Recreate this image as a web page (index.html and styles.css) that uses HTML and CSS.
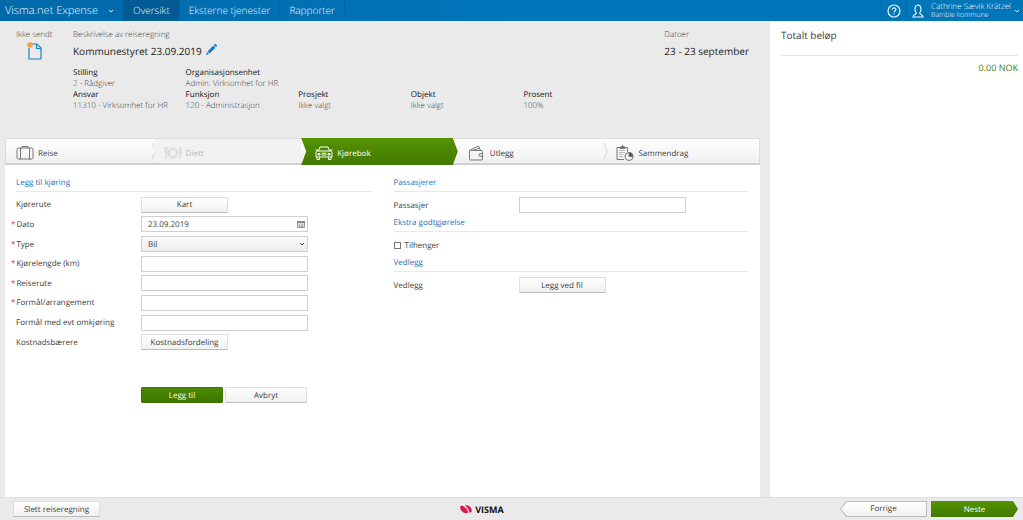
FILE: index.html
```html
<!DOCTYPE html>
<html lang="no">
<head>
<meta charset="utf-8">
<meta name="viewport" content="width=device-width, initial-scale=1">
<title>Visma.net Expense</title>
<link rel="stylesheet" href="styles.css">
</head>
<body>
<header class="topbar">
  <button class="brand" type="button">Visma.net Expense
    <svg class="chevron" viewBox="0 0 6 4"><path d="M1 1l2 2 2-2"/></svg>
  </button>
  <nav class="nav">
    <a class="nav-link current" href="#">Oversikt</a>
    <a class="nav-link" href="#">Eksterne tjenester</a>
    <a class="nav-link" href="#">Rapporter</a>
  </nav>
  <button class="help" type="button" aria-label="Hjelp">
    <svg viewBox="0 0 14 14"><circle cx="7" cy="7" r="6"/><path d="M5.2 5.6c0-2.4 3.7-2.4 3.7-.1 0 1.3-1.8 1.4-1.8 2.8M7.1 9.4v1.1"/></svg>
  </button>
  <button class="user" type="button">
    <svg class="avatar" viewBox="0 0 12 14"><path d="M4.400 9.200C2.200 7 2.400 1 6 1s3.800 6 1.600 8.200c0 1.300 3.400 1 3.400 3.800H1c0-2.800 3.400-2.500 3.400-3.800z"/></svg>
    <span class="user-text"><span>Cathrine Sævik Krätzel</span><span>Bamble kommune</span></span>
    <svg class="chevron" viewBox="0 0 6 4"><path d="M1 1l2 2 2-2"/></svg>
  </button>
</header>

<div class="page">
  <main class="content">
    <section class="summary">
      <div class="status">
        <span>Ikke sendt</span>
        <svg viewBox="0 0 16 20"><path d="M4 3h6l4 4v11H2V7M9.500 3v4.500H14" fill="none" stroke="#1a82c8" stroke-width="1.200"/><circle cx="3" cy="4" r="2.800" fill="#f3a33c"/></svg>
      </div>
      <div class="details">
        <div class="headline">
          <div>
            <p class="caption">Beskrivelse av reiseregning</p>
            <h1 class="title">Kommunestyret 23.09.2019
              <button class="edit" type="button" aria-label="Rediger"><svg viewBox="0 0 12 12"><path d="M0 12l1-3.200 2.200 2.200zM1.600 8.100L8 1.700l2.300 2.300-6.400 6.400zM8.600 1.100l.8-.8c.5-.5 1-.4 1.500 0l.8.800c.4.500.4 1 0 1.500l-.8.800z"/></svg></button>
            </h1>
          </div>
          <div class="dates">
            <p class="caption">Datoer</p>
            <p class="title">23 - 23 september</p>
          </div>
        </div>
        <dl class="facts">
          <div><dt>Stilling</dt><dd>2 - Rådgiver</dd></div>
          <div class="last"><dt>Organisasjonsenhet</dt><dd>Admin. Virksomhet for HR</dd></div>
          <div><dt>Ansvar</dt><dd>11310 - Virksomhet for HR</dd></div>
          <div><dt>Funksjon</dt><dd>120 - Administrasjon</dd></div>
          <div><dt>Prosjekt</dt><dd>Ikke valgt</dd></div>
          <div><dt>Objekt</dt><dd>Ikke valgt</dd></div>
          <div><dt>Prosent</dt><dd>100%</dd></div>
        </dl>
      </div>
    </section>

    <nav class="steps">
      <a class="step" href="#">
        <svg class="step-icon" viewBox="0 0 18 16"><path d="M2.500 3h13q1.500 0 1.500 1.500v8q0 1.500-1.500 1.500h-13Q1 14 1 12.500v-8Q1 3 2.500 3zM4.500 3v11M13.500 3v11M6 3V1.500h6V3M4 14v1M14 14v1"/></svg>
        Reise
        <svg class="divider" viewBox="0 0 5 26" preserveAspectRatio="none"><path d="M1 4l3 9-3 9"/></svg>
      </a>
      <a class="step disabled" href="#">
        <svg class="step-icon" viewBox="0 0 18 16"><circle cx="9" cy="8" r="5"/><circle cx="9" cy="8" r="3.500"/><path d="M1 2v4q0 2 1 2t1-2V2M2 2v12M16 14V2q1.500 1 1.500 6H16"/></svg>
        Diett
      </a>
      <a class="step active" href="#" aria-current="step">
        <svg class="step-icon" viewBox="0 0 18 16"><path d="M3.500 6L5 2h8l1.500 4M2 6h14l1 1.500V12H1V7.500zM2 12v2.500h2.500V12M13.500 12v2.500H16V12M.5 5H3M15 5h2.500M3 8.500h2v1.500H3zM13 8.500h2v1.500h-2zM6.500 8.200h5M6.500 10h5"/></svg>
        Kjørebok
      </a>
      <a class="step" href="#">
        <svg class="step-icon" viewBox="0 0 18 16"><path d="M2.500 5.500h11q1 0 1 1v7.500q0 1-1 1h-11q-1 0-1-1V6q0-1 1-1.300L10.500 1l2 4.500M4.500 5.500L12 3M14.500 8.500H12.500q-1.500 0-1.500 1.500t1.500 1.500h2M12.500 10h.6"/></svg>
        Utlegg
        <svg class="divider" viewBox="0 0 5 26" preserveAspectRatio="none"><path d="M1 4l3 9-3 9"/></svg>
      </a>
      <a class="step" href="#">
        <svg class="step-icon" viewBox="0 0 18 16"><path d="M8 14.500H1v-12h3M9 2.500h2.500V7"/><path d="M3 5.500h6M3 7.500h6M3 9.500h4M3 11.500h4" stroke="#bbb"/><path d="M4 3.500V2h1.200Q6.500-.5 7.800 2H9v1.500z" fill="#666"/><circle cx="13" cy="11.500" r="4"/><path d="M13 11.500v-4a4 4 0 0 1 4 4z" fill="#555"/></svg>
        Sammendrag
      </a>
    </nav>

    <form class="panel">
      <section class="column">
        <h2 class="section-title">Legg til kjøring</h2>
        <div class="fields driving">
          <label for="map">Kjørerute</label><button class="btn" id="map" type="button">Kart</button>
          <label class="required" for="date">Dato</label>
          <div class="date-field">
            <input class="field" id="date" type="text" value="23.09.2019">
            <svg class="calendar" viewBox="0 0 8 8"><path d="M.5 1.500h7v6h-7z" fill="#ddd" stroke="#999"/><path d="M0 1h8v2H0z" fill="#888"/><path d="M2 5h1M4 5h2M2 6.500h1M4 6.500h2" stroke="#999"/></svg>
          </div>
          <label class="required" for="type">Type</label>
          <div class="select-wrap">
            <select class="field" id="type"><option>Bil</option></select>
            <svg class="chevron" viewBox="0 0 6 4"><path d="M1 1l2 2 2-2"/></svg>
          </div>
          <label class="required" for="length">Kjørelengde (km)</label><input class="field" id="length" type="text">
          <label class="required" for="route">Reiserute</label><input class="field" id="route" type="text">
          <label class="required" for="purpose">Formål/arrangement</label><input class="field" id="purpose" type="text">
          <label for="detour">Formål med evt omkjøring</label><input class="field" id="detour" type="text">
          <label for="cost">Kostnadsbærere</label><button class="btn" id="cost" type="button">Kostnadsfordeling</button>
        </div>
        <div class="actions">
          <button class="btn primary" type="button">Legg til</button>
          <button class="btn" type="button">Avbryt</button>
        </div>
      </section>

      <section class="column">
        <h2 class="section-title">Passasjerer</h2>
        <div class="fields single">
          <label for="passenger">Passasjer</label><input class="field" id="passenger" type="text">
        </div>
        <h2 class="section-title">Ekstra godtgjørelse</h2>
        <label class="check"><input type="checkbox">Tilhenger</label>
        <h2 class="section-title">Vedlegg</h2>
        <div class="fields single">
          <label for="file">Vedlegg</label><button class="btn" id="file" type="button">Legg ved fil</button>
        </div>
      </section>
    </form>
  </main>

  <aside class="totals">
    <h2>Totalt beløp</h2>
    <p>0.00 NOK</p>
  </aside>
</div>

<footer class="bottombar">
  <button class="btn" type="button">Slett reiseregning</button>
  <div class="logo">
    <svg viewBox="0 0 12 10"><path d="M.3 2.200C2.500.5 7 3.500 8.200 8.700 4 10.500-.8 6 .3 2.200zM4.800 1.500C7.500.3 12 3 11.800 7c-.3 1-1.300 1.500-2.300 1.700C9 5.500 7.200 3 4.800 1.500z" fill="#e0164c"/></svg>
    <span>VISMA</span>
  </div>
  <div class="pager">
    <button class="back" type="button"><span>Forrige</span></button>
    <button class="next" type="button">Neste</button>
  </div>
</footer>
</body>
</html>
```
FILE: styles.css
```css
* {
  box-sizing: border-box;
}

body {
  margin: 0;
  min-height: 100vh;
  display: flex;
  flex-direction: column;
  background: #eaeaea;
  color: #3c3c3c;
  font: 8px/11px "Open Sans", "Noto Sans", sans-serif;
  text-rendering: geometricPrecision;
}

h1, h2, p, dl, dd {
  margin: 0;
  font-weight: 400;
}

a {
  color: inherit;
  text-decoration: none;
}

button, input, select {
  font: inherit;
  color: inherit;
  text-rendering: inherit;
}

.chevron {
  width: 6px;
  height: 4px;
  fill: none;
  stroke: currentColor;
  stroke-width: 1;
}

/* Top bar */
.topbar {
  display: flex;
  height: 21px;
  background: linear-gradient(90deg, #0069aa, #0075ba 50%);
  color: #eef7fd;
  font-weight: 300;
}

.brand, .help, .user {
  display: flex;
  align-items: center;
  border: 0;
  padding: 0;
  background: none;
}

.brand {
  width: 123px;
  justify-content: space-between;
  padding: 0 9px 0 5px;
  font-size: 11px;
}

.nav {
  display: flex;
  flex: 1;
  font-size: 10px;
  line-height: 20px;
}

.nav-link {
  padding: 0 9px 0 10px;
  box-shadow: 1px 0 #0068aa;
}

.nav-link.current {
  background: #005a93;
}

.help {
  width: 26px;
  justify-content: center;
  border: solid #0068aa;
  border-width: 0 1px;
}

.help svg {
  width: 14px;
  height: 14px;
  fill: none;
  stroke: currentColor;
  stroke-width: 1.2;
}

.user {
  width: 116px;
  gap: 7px;
  padding: 0 3px 0 5px;
}

.avatar {
  width: 12px;
  height: 14px;
  flex: none;
  fill: none;
  stroke: currentColor;
  stroke-width: 1.2;
}

.user .chevron {
  flex: none;
}

.user-text {
  flex: 1;
  min-width: 0;
  display: flex;
  flex-direction: column;
  line-height: 9px;
  text-align: left;
  white-space: nowrap;
}

.user-text span + span {
  font-size: 7px;
}

/* Page columns */
.page {
  flex: 1;
  display: flex;
}

.content {
  flex: 1;
  display: flex;
  flex-direction: column;
  padding: 0 10px 0 5px;
}

.totals {
  width: 253px;
  padding: 7px 5px 0 11px;
  background: #fff;
}

.totals h2 {
  padding-bottom: 13px;
  border-bottom: 1px solid #e2e2e2;
  font-size: 10px;
  line-height: 14px;
}

.totals p {
  padding-top: 6px;
  color: #3f7d0a;
  font-size: 9px;
  line-height: 12px;
  text-align: right;
}

/* Report summary */
.summary {
  display: flex;
  height: 117px;
  padding-top: 8px;
}

.status {
  width: 68px;
  padding-left: 11px;
  color: #444;
  font-weight: 300;
}

.status svg {
  display: block;
  width: 16px;
  height: 20px;
  margin: 1px 0 0 11px;
}

.details {
  flex: 1;
}

.headline {
  display: flex;
  justify-content: space-between;
  padding-right: 11px;
}

.caption {
  color: #444;
  font-weight: 300;
}

.title {
  display: flex;
  gap: 4px;
  padding-top: 4px;
  color: #222;
  font-size: 10px;
  line-height: 14px;
}

.edit {
  width: 11px;
  height: 11px;
  padding: 0;
  border: 0;
  background: none;
}

.edit svg {
  display: block;
  fill: #1a7cc4;
}

.facts {
  display: grid;
  grid-template-columns: repeat(5, 1fr);
  max-width: 563px;
  padding-top: 9px;
  white-space: nowrap;
}

.facts .last {
  grid-column: 2 / -1;
}

.facts dt {
  color: #111;
}

.facts dd {
  color: #444;
  font-weight: 300;
}

/* Wizard steps */
.steps {
  display: grid;
  grid-template-columns: 148fr 148fr 157fr 149fr 153fr;
  height: 27px;
  border: 1px solid #dcdcdc;
  border-bottom: 2px solid #d0d0d0;
  background: linear-gradient(#fff, #f0f0f0);
}

.step {
  position: relative;
  display: flex;
  align-items: center;
  gap: 4px;
  padding: 4px 0 0 10px;
}

.step-icon {
  width: 18px;
  height: 16px;
  fill: none;
  stroke: #777;
  stroke-width: 1;
}

.divider {
  position: absolute;
  top: 0;
  right: -2px;
  width: 5px;
  height: 100%;
  fill: none;
  stroke: #d4d4d4;
}

.disabled {
  background: #f2f2f2;
  color: #b4b4b4;
}

.disabled .step-icon {
  stroke: #d4d4d4;
}

.active {
  margin: -1px 0 -2px;
  padding: 3px 0 0 14px;
  background: linear-gradient(#559400, #427800);
  clip-path: polygon(0 0, calc(100% - 5px) 0, 100% 50%, calc(100% - 5px) 100%, 0 100%, 5px 50%);
  color: #fff;
}

.active .step-icon {
  stroke: #fff;
}

/* Form */
.panel {
  flex: 1;
  display: grid;
  grid-template-columns: 1fr 1fr;
  gap: 22px;
  padding: 11px 11px 0;
  background: #fff;
}

.section-title {
  padding: 1px 0 2px;
  border-bottom: 1px solid #e8e8e8;
  color: #1f70b8;
  font-size: 8px;
  line-height: 12px;
}

.fields {
  display: grid;
  grid-template-columns: 125px 1fr;
  align-items: center;
}

.driving {
  height: 157px;
  margin-top: 3px;
  grid-template-rows: repeat(8, 1fr);
}

.single {
  height: 24px;
  padding-top: 2px;
}

.required::before {
  content: "*";
  margin-left: -5px;
  padding-right: 1px;
  color: #c23b3b;
}

.field {
  width: 167px;
  height: 16px;
  padding: 0 6px;
  border: 1px solid #cfcfcf;
  border-radius: 0;
  background: #fff;
}

.date-field, .select-wrap {
  position: relative;
  display: flex;
  width: 167px;
}

.calendar, .select-wrap .chevron {
  position: absolute;
  right: 3px;
  top: 4px;
  width: 8px;
  height: 8px;
  pointer-events: none;
}

.select-wrap .chevron {
  top: 6px;
  width: 6px;
  height: 4px;
}

select.field {
  appearance: none;
  background: linear-gradient(#fafafa, #ededed);
}

.btn {
  width: 87px;
  height: 16px;
  padding: 0;
  border: 1px solid #dedede;
  border-bottom-color: #bcbcbc;
  border-radius: 1px;
  background: linear-gradient(#fff, #f1f1f1);
}

.primary {
  border-color: #3f7400;
  background: linear-gradient(#4c8a00, #407500);
  color: #fff;
}

.actions {
  display: flex;
  gap: 2px;
  padding: 35px 0 0 125px;
}

.actions .btn {
  width: 82px;
}

.check {
  display: flex;
  align-items: center;
  gap: 4px;
  height: 24px;
  padding-top: 2px;
}

.check input {
  appearance: none;
  width: 7px;
  height: 7px;
  margin: 0;
  border: 1px solid #777;
  background: #fff;
}

/* Bottom bar */
.bottombar {
  display: grid;
  grid-template-columns: 1fr auto 1fr;
  align-items: center;
  height: 23px;
  padding: 0 5px 0 13px;
  border-top: 1px solid #dedede;
}

.logo {
  display: flex;
  align-items: center;
  gap: 3px;
  margin-right: 67px;
  color: #111;
  font-size: 9px;
  font-weight: 700;
}

.logo svg {
  width: 12px;
  height: 10px;
}

.pager {
  display: flex;
  justify-content: flex-end;
  gap: 4px;
}

.back, .next {
  height: 16px;
  padding: 0;
  border: 0;
}

.back {
  width: 87px;
  padding: 1px;
  background: #bdbdbd;
  clip-path: polygon(6px 0, 100% 0, 100% 100%, 6px 100%, 0 50%);
}

.back span {
  display: block;
  line-height: 14px;
  background: linear-gradient(#fff, #f1f1f1);
  clip-path: polygon(6px 0, 100% 0, 100% 100%, 6px 100%, 0 50%);
}

.next {
  width: 87px;
  background: linear-gradient(#559400, #427800);
  clip-path: polygon(0 0, calc(100% - 5px) 0, 100% 50%, calc(100% - 5px) 100%, 0 100%);
  color: #fff;
}
```
